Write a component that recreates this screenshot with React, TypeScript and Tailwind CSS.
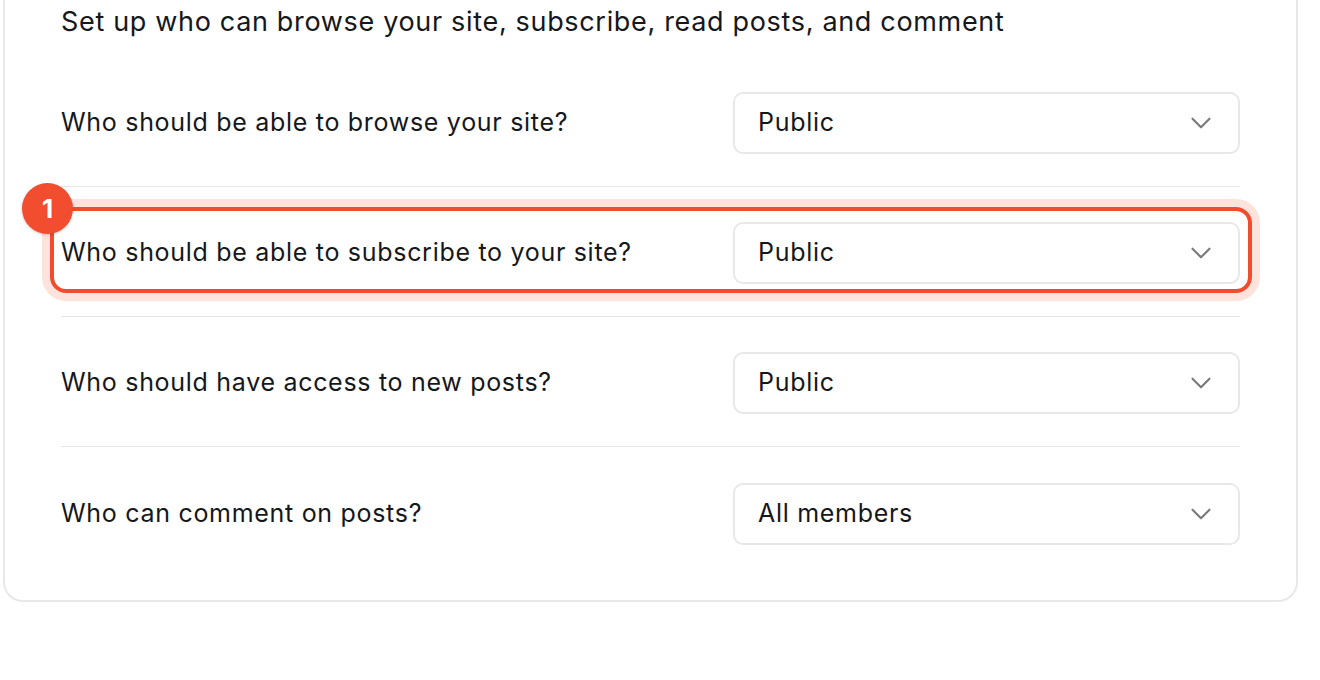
import { ChevronDown } from 'lucide-react';

const ROWS = [
  { label: 'Who should be able to browse your site?', value: 'Public' },
  { label: 'Who should be able to subscribe to your site?', value: 'Public', highlight: true },
  { label: 'Who should have access to new posts?', value: 'Public' },
  { label: 'Who can comment on posts?', value: 'All members' },
];

function Select({ value }: { value: string }) {
  return (
    <div className="flex h-[62px] w-[507px] shrink-0 items-center justify-between rounded-[10px] border-2 border-[#e8e8e8] bg-white pl-[23px] pr-[20px]">
      <span className="text-[25px] tracking-[0.7px] text-[#15171a]">{value}</span>
      <ChevronDown className="h-[34px] w-[34px] text-[#7a7a7a]" strokeWidth={1.5} />
    </div>
  );
}

export default function App() {
  return (
    <div className="min-h-[680px] bg-white font-['Inter',sans-serif] text-[#15171a]">
      <div className="ml-[3px] w-[1295px] rounded-b-[20px] border-x-2 border-b-2 border-[#e8e8e8] px-[56px] pb-[23px]">
        <p className="pt-[4px] text-[27px] leading-[36px] tracking-[0.67px]">
          Set up who can browse your site, subscribe, read posts, and comment
        </p>
        <div className="mt-[17px]">
          {ROWS.map((row, i) => (
            <div
              key={row.label}
              className={`relative flex h-[130px] items-center justify-between pt-[3px] ${
                i < ROWS.length - 1 ? 'border-b border-[#e6e6e6]' : ''
              }`}
            >
              <span className="text-[25px] tracking-[0.7px]">{row.label}</span>
              <Select value={row.value} />
              {row.highlight && (
                <>
                  <div className="pointer-events-none absolute left-[-11px] right-[-12px] top-[20px] h-[86px] rounded-[16px] border-[4px] border-[#f24b2d] shadow-[0_0_0_8px_#fee2dc]" />
                  <div className="absolute left-[-39px] top-[-4px] flex h-[51px] w-[51px] items-center justify-center rounded-full bg-[#f24d2e] text-[26px] font-bold text-white shadow-[0_1px_3px_rgba(0,0,0,0.2)]">
                    1
                  </div>
                </>
              )}
            </div>
          ))}
        </div>
      </div>
    </div>
  );
}
